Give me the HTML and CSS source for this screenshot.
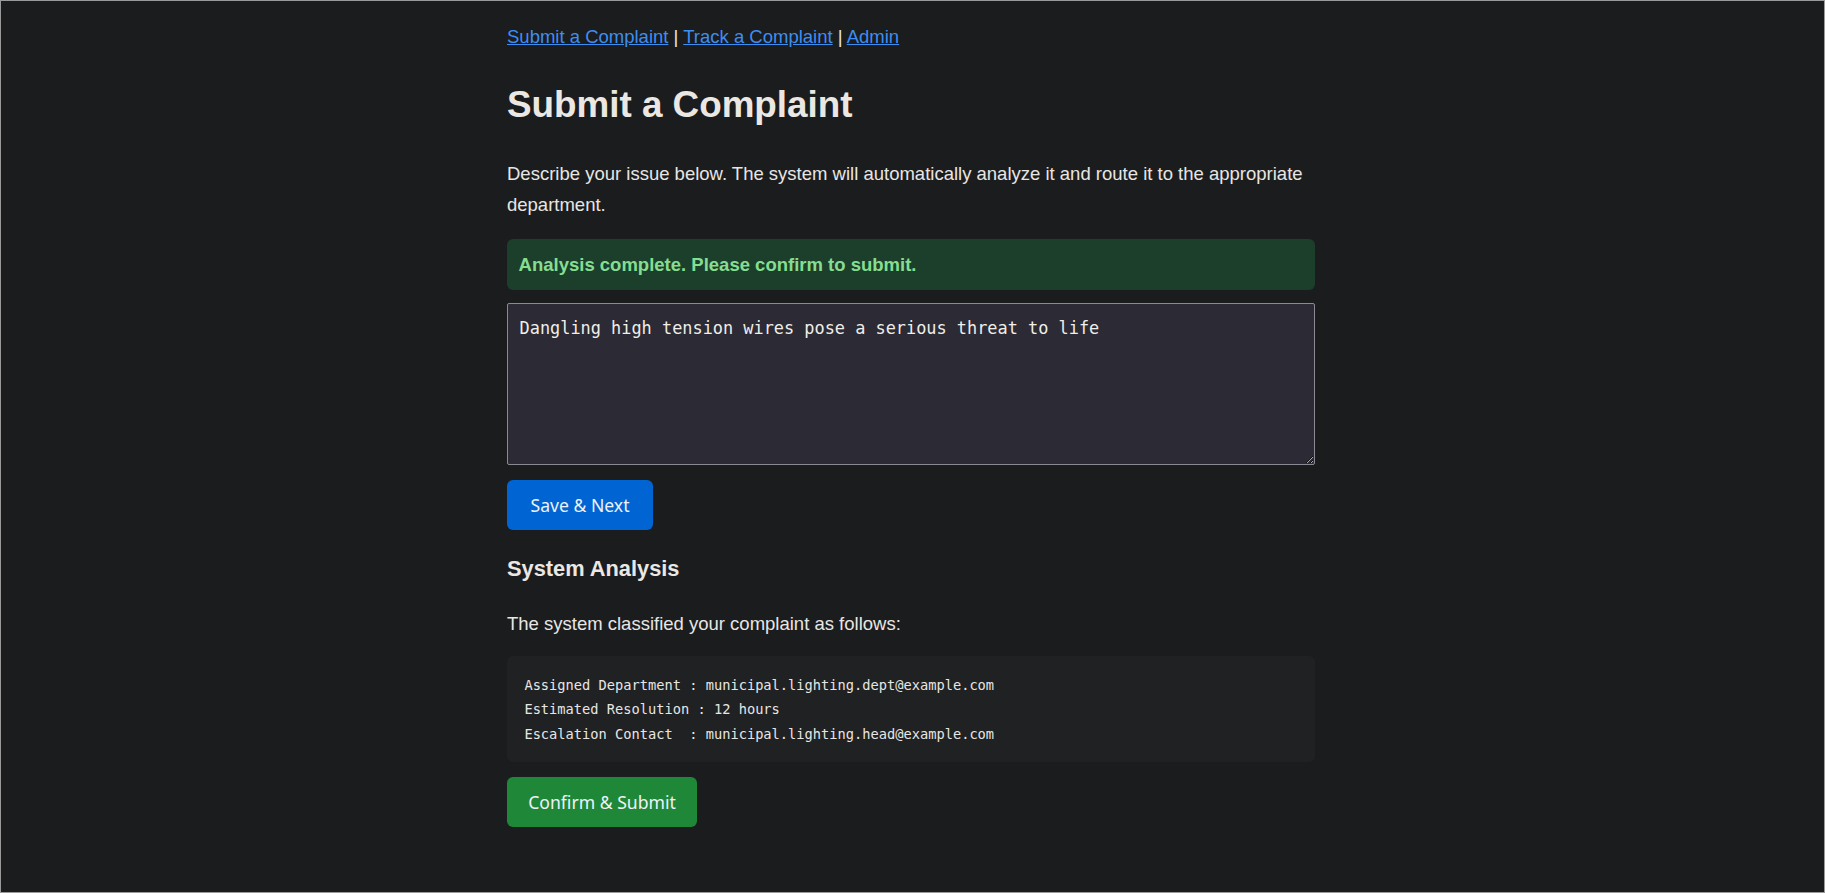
FILE: index.html
```html
<!DOCTYPE html>
<html lang="en">
<head>
<meta charset="utf-8">
<title>Submit a Complaint</title>
<link rel="stylesheet" href="styles.css">
</head>
<body>
<div class="page">
  <main class="container">
    <nav class="nav">
      <a href="#">Submit a Complaint</a> | <a href="#">Track a Complaint</a> | <a href="#">Admin</a>
    </nav>
    <h1 class="title">Submit a Complaint</h1>
    <p class="intro">Describe your issue below. The system will automatically analyze it and route it to the appropriate department.</p>
    <div class="alert">Analysis complete. Please confirm to submit.</div>
    <textarea class="complaint">Dangling high tension wires pose a serious threat to life</textarea>
    <div class="actions">
      <button class="btn btn-blue" type="button">Save &amp; Next</button>
    </div>
    <h3 class="subtitle">System Analysis</h3>
    <p class="lead">The system classified your complaint as follows:</p>
    <pre class="result">Assigned Department : municipal.lighting.dept@example.com
Estimated Resolution : 12 hours
Escalation Contact  : municipal.lighting.head@example.com</pre>
    <div class="actions">
      <button class="btn btn-green" type="button">Confirm &amp; Submit</button>
    </div>
  </main>
</div>
</body>
</html>
```
FILE: styles.css
```css
html, body {
  margin: 0;
  padding: 0;
  height: 100%;
}

body {
  background: #1b1c1e;
  color: #e8e6e3;
  font-family: "Liberation Sans", Arial, sans-serif;
  font-size: 18.5px;
  line-height: 1.6;
}

.page {
  box-sizing: border-box;
  min-height: 100%;
  border: 1px solid #9a9a9a;
  padding: 20.5px 3px 0 0;
  display: flex;
  justify-content: center;
}

.container {
  width: 808px;
}

.nav {
  line-height: 30px;
}

.nav a {
  color: #3d8ef2;
  text-decoration: underline;
}

.title {
  font-size: 36.8px;
  font-weight: bold;
  line-height: 1.6;
  margin: 24px 0 25px;
  color: #ebe8e4;
}

.intro {
  margin: 0 0 18.6px;
  line-height: 30.4px;
}

.alert {
  background: #1b3f2b;
  color: #86dd91;
  font-weight: bold;
  border-radius: 6px;
  padding: 11px 11.6px;
  margin-bottom: 12.6px;
}

.complaint {
  display: block;
  box-sizing: border-box;
  width: 808px;
  height: 162px;
  margin: 0;
  background: #2b2a35;
  color: #f0eee8;
  border: 1px solid #8a8a94;
  border-radius: 2px;
  padding: 14px 11.6px;
  font-family: "DejaVu Sans Mono", monospace;
  font-size: 16.9px;
  line-height: 1.2;
  resize: vertical;
}

.actions {
  display: flex;
  padding-top: 15px;
}

.btn {
  border: 0;
  border-radius: 6px;
  color: #eef2f8;
  font-family: "Noto Sans", "Open Sans", sans-serif;
  font-size: 17.6px;
  line-height: 26px;
  padding: 12px 23.5px;
  cursor: pointer;
}

.btn-blue {
  background: #0064d2;
}

.btn-green {
  background: #1f8838;
  padding-left: 21.2px;
  padding-right: 21.2px;
}

.subtitle {
  font-size: 21.8px;
  line-height: 1.6;
  margin: 22px 0 22px;
  color: #ebe8e4;
}

.lead {
  margin: 0 0 17.5px;
}

.result {
  margin: 0;
  background: #1f2123;
  border-radius: 6px;
  padding: 17px 17.4px 16px;
  font-family: "DejaVu Sans Mono", monospace;
  font-size: 13.7px;
  line-height: 24.4px;
  color: #e8e6e3;
}
```
